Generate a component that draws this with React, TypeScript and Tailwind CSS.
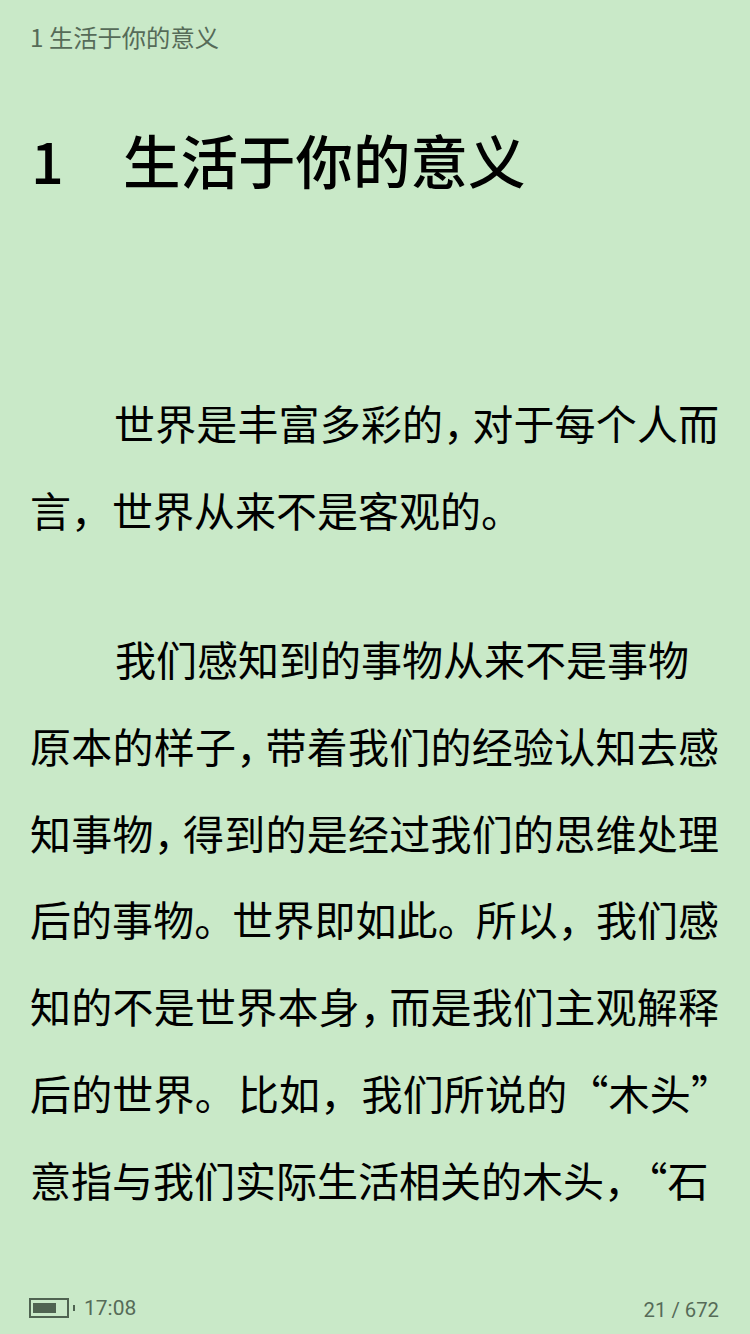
const font = "font-['Noto_Sans_CJK_SC','Noto_Sans_CJK_JP',sans-serif]";

// each line is set by hand, the reader justifies the full ones
function Line({ children, full = true, indent = false }: { children: React.ReactNode; full?: boolean; indent?: boolean }) {
  return (
    <div
      className={`h-[86.7px] leading-[86.7px] ${full ? "[text-align:justify] [text-align-last:justify]" : "whitespace-nowrap"} ${indent ? "pl-[84px]" : ""}`}
    >
      {children}
    </div>
  );
}

// squeezed punctuation, the reader compresses it to fit the line
function Comma() {
  return <span className="tracking-[-12px]">，</span>;
}

export default function App() {
  return (
    <main className={`h-[1334px] w-[750px] overflow-hidden bg-[#c9e9c8] flex flex-col ${font}`}>
      <header className="pl-[30px] pt-[20px] h-[56px] text-[24.3px] leading-[34px] text-[#566b58]">1 生活于你的意义</header>

      <h1 className="pl-[30px] mt-[43px] h-[120px] text-[57.5px] leading-[120px] font-medium text-black whitespace-nowrap">
        <span className="inline-block w-[93px] pl-[1px]">1</span>生活于你的意义
      </h1>

      <article className="mt-[160px] pl-[30px] pr-[31px] text-[41px] text-black flex-1">
        <Line indent>世界是丰富多彩的<Comma />对于每个人而</Line>
        <Line full={false}>言，世界从来不是客观的。</Line>
        <div className="h-[63px]" />
        <Line indent full={false}><span className="pl-[1px]">我们感知到的事物从来不是事物</span></Line>
        <Line>原本的样子<Comma />带着我们的经验认知去感</Line>
        <Line>知事物<Comma />得到的是经过我们的思维处理</Line>
        <Line>
          后的事物<span className="tracking-[-3px]">。</span>世界即如此<span className="tracking-[-3px]">。</span>所以<span className="tracking-[-3px]">，</span>我们感
        </Line>
        <Line>知的不是世界本身<Comma />而是我们主观解释</Line>
        <Line>
          后的世界<span className="tracking-[2px]">。</span>比如，我们所说的“木头<span className="tracking-[-13px]">”</span>
        </Line>
        <Line full={false}>意指与我们实际生活相关的木头，<span className="pl-[2px]">“石</span></Line>
      </article>

      <footer className="h-[60px] flex items-start justify-between pl-[29px] pr-[31px] text-[21px] leading-[28px] text-[#566b58] font-['Roboto',sans-serif]">
        <div className="flex items-center gap-[9px] pt-[20px]">
          <div className="flex items-center gap-[4px]">
            <div className="w-[40px] h-[20px] border-[2px] border-[#4f6351] pl-[2px] py-[3px] pr-[11px]">
              <div className="h-full bg-[#4f6351]" />
            </div>
            <div className="w-[2px] h-[6px] bg-[#4f6351]" />
          </div>
          <span>17:08</span>
        </div>
        <span className="pt-[22px] text-[20.3px]">21 / 672</span>
      </footer>
    </main>
  );
}
